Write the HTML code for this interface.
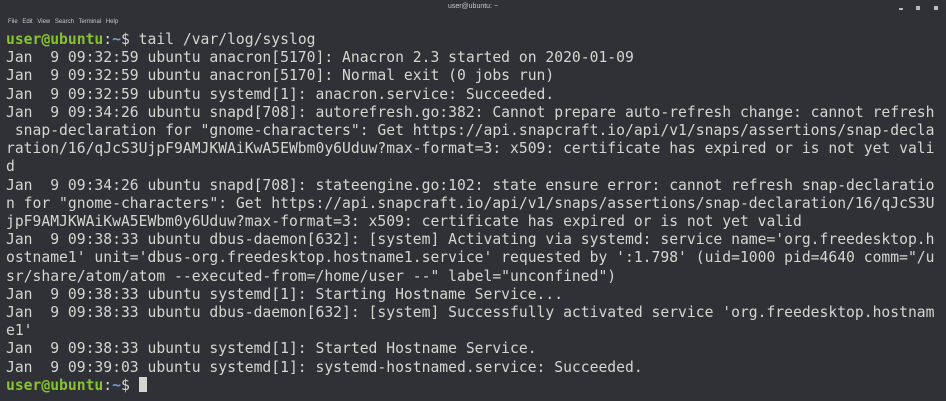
<!DOCTYPE html>
<html><head><meta charset="utf-8"><style>
html,body{margin:0;padding:0;width:946px;height:401px;overflow:hidden;background:#2f3136;}
.title{position:absolute;top:3px;left:0;width:946px;text-align:center;color:#c8c8c8;font:7px "Liberation Sans",sans-serif;}
.menu{position:absolute;top:19px;left:8px;color:#c8c8c8;font:6px "Liberation Sans",sans-serif;word-spacing:3px;}
.wb{position:absolute;top:6px;width:4px;height:4px;background:#bbb;}
pre{position:absolute;top:31px;left:6px;margin:0;font-family:"DejaVu Sans Mono","Liberation Mono",monospace;font-size:14.7px;line-height:18.2px;color:#d3d7cf;}
.g{color:#86c231;font-weight:bold}.b{color:#6d9bd8;font-weight:bold}
.cur{display:inline-block;width:8px;height:15px;background:#d3d7cf;vertical-align:-2px}
</style></head><body>
<div class="title">user@ubuntu: ~</div>
<div class="menu">File Edit View Search Terminal Help</div>
<div class="wb" style="left:899px;top:8px;height:2px"></div>
<div class="wb" style="left:916px"></div>
<div class="wb" style="left:934px"></div>
<pre><span class="g">user@ubuntu</span>:<span class="b">~</span>$ tail /var/log/syslog
Jan  9 09:32:59 ubuntu anacron[5170]: Anacron 2.3 started on 2020-01-09
Jan  9 09:32:59 ubuntu anacron[5170]: Normal exit (0 jobs run)
Jan  9 09:32:59 ubuntu systemd[1]: anacron.service: Succeeded.
Jan  9 09:34:26 ubuntu snapd[708]: autorefresh.go:382: Cannot prepare auto-refresh change: cannot refresh
 snap-declaration for "gnome-characters": Get https://api.snapcraft.io/api/v1/snaps/assertions/snap-decla
ration/16/qJcS3UjpF9AMJKWAiKwA5EWbm0y6Uduw?max-format=3: x509: certificate has expired or is not yet vali
d
Jan  9 09:34:26 ubuntu snapd[708]: stateengine.go:102: state ensure error: cannot refresh snap-declaratio
n for "gnome-characters": Get https://api.snapcraft.io/api/v1/snaps/assertions/snap-declaration/16/qJcS3U
jpF9AMJKWAiKwA5EWbm0y6Uduw?max-format=3: x509: certificate has expired or is not yet valid
Jan  9 09:38:33 ubuntu dbus-daemon[632]: [system] Activating via systemd: service name='org.freedesktop.h
ostname1' unit='dbus-org.freedesktop.hostname1.service' requested by ':1.798' (uid=1000 pid=4640 comm="/u
sr/share/atom/atom --executed-from=/home/user --" label="unconfined")
Jan  9 09:38:33 ubuntu systemd[1]: Starting Hostname Service...
Jan  9 09:38:33 ubuntu dbus-daemon[632]: [system] Successfully activated service 'org.freedesktop.hostnam
e1'
Jan  9 09:38:33 ubuntu systemd[1]: Started Hostname Service.
Jan  9 09:39:03 ubuntu systemd[1]: systemd-hostnamed.service: Succeeded.
<span class="g">user@ubuntu</span>:<span class="b">~</span>$ <span class="cur"></span></pre>
</body></html>
